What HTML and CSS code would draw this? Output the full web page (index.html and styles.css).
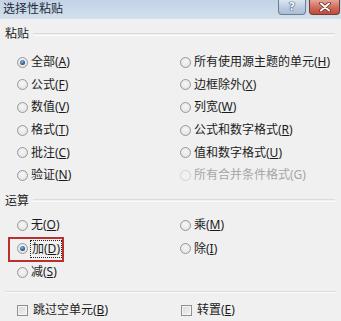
FILE: index.html
```html
<!DOCTYPE html>
<html lang="zh-CN">
<head>
<meta charset="utf-8">
<title>选择性粘贴</title>
<link rel="stylesheet" href="styles.css">
</head>
<body>
<div class="dialog">
  <div class="titlebar">
    <span class="title">选择性粘贴</span>
    <div class="tb-buttons">
      <span class="tb-btn help">?</span>
      <span class="tb-btn close">
        <svg width="14" height="10" viewBox="0 0 14 10"><path d="M3 1.5 L11 8.5 M11 1.5 L3 8.5" stroke="#6b2a22" stroke-width="3.6" stroke-linecap="round"/><path d="M3 1.5 L11 8.5 M11 1.5 L3 8.5" stroke="#ffffff" stroke-width="2" stroke-linecap="round"/></svg>
      </span>
    </div>
  </div>
  <div class="content">
    <div class="group-label"><span class="gl-text">粘贴</span><span class="gl-line"></span></div>
    <div class="grid paste">
      <div class="opt"><span class="radio checked"></span><span class="txt">全部(<u>A</u>)</span></div>
      <div class="opt"><span class="radio"></span><span class="txt">所有使用源主题的单元(<u>H</u>)</span></div>
      <div class="opt"><span class="radio"></span><span class="txt">公式(<u>F</u>)</span></div>
      <div class="opt"><span class="radio"></span><span class="txt">边框除外(<u>X</u>)</span></div>
      <div class="opt"><span class="radio"></span><span class="txt">数值(<u>V</u>)</span></div>
      <div class="opt"><span class="radio"></span><span class="txt">列宽(<u>W</u>)</span></div>
      <div class="opt"><span class="radio"></span><span class="txt">格式(<u>T</u>)</span></div>
      <div class="opt"><span class="radio"></span><span class="txt">公式和数字格式(<u>R</u>)</span></div>
      <div class="opt"><span class="radio"></span><span class="txt">批注(<u>C</u>)</span></div>
      <div class="opt"><span class="radio"></span><span class="txt">值和数字格式(<u>U</u>)</span></div>
      <div class="opt"><span class="radio"></span><span class="txt">验证(<u>N</u>)</span></div>
      <div class="opt disabled"><span class="radio"></span><span class="txt">所有合并条件格式(G)</span></div>
    </div>
    <div class="group-label op-label"><span class="gl-text">运算</span><span class="gl-line"></span></div>
    <div class="grid ops">
      <div class="opt"><span class="radio"></span><span class="txt">无(<u>O</u>)</span></div>
      <div class="opt"><span class="radio"></span><span class="txt">乘(<u>M</u>)</span></div>
      <div class="opt highlighted"><span class="radio checked"></span><span class="txt focus">加(<u>D</u>)</span></div>
      <div class="opt"><span class="radio"></span><span class="txt">除(<u>I</u>)</span></div>
      <div class="opt"><span class="radio"></span><span class="txt">减(<u>S</u>)</span></div>
    </div>
    <div class="separator"></div>
    <div class="grid checks">
      <div class="opt"><span class="checkbox"></span><span class="txt">跳过空单元(<u>B</u>)</span></div>
      <div class="opt"><span class="checkbox"></span><span class="txt">转置(<u>E</u>)</span></div>
    </div>
  </div>
</div>
</body>
</html>
```

FILE: styles.css
```css
html, body {
  margin: 0;
  padding: 0;
  background: #f0f0f0;
}

.dialog {
  width: 341px;
  height: 321px;
  overflow: hidden;
  background: #f0f0f0;
  font-family: "Noto Sans", "Noto Sans CJK SC", sans-serif;
  font-size: 12px;
  color: #1b1b1b;
}

.titlebar {
  height: 19px;
  display: flex;
  align-items: flex-start;
  background: linear-gradient(#c3d3e6, #d3dfec);
}

.title {
  padding-left: 3px;
  line-height: 18px;
  font-size: 12px;
  color: #1f2a38;
}

.tb-buttons {
  margin-left: auto;
  display: flex;
  gap: 3px;
  margin-right: 1px;
}

.tb-btn {
  height: 15px;
  display: flex;
  align-items: center;
  justify-content: center;
  border: 1px solid #6d7e93;
  border-top: none;
  border-radius: 0 0 4px 4px;
  box-sizing: border-box;
}

.help {
  width: 28px;
  background: linear-gradient(#dbe6f2, #b9cbe0 55%, #a9bed7);
  color: #ffffff;
  font-family: "DejaVu Sans", sans-serif;
  font-weight: bold;
  font-size: 11px;
  line-height: 14px;
  text-shadow: 0 0 1px #33475f, 0 0 1px #33475f, 0 0 1px #33475f;
}

.close {
  width: 31px;
  border-color: #7a3a30;
  background: linear-gradient(#e5a597, #d0705f 50%, #c0483a);
}

.content {
  padding: 0 5px;
}

.group-label {
  display: flex;
  align-items: center;
  height: 14px;
  margin-top: 8px;
}

.gl-text {
  line-height: 14px;
  padding-right: 4px;
}

.gl-line {
  flex: 1;
  height: 1px;
  margin-right: 1px;
  border-top: 1px solid #d7dce1;
  border-bottom: 1px solid #fbfbfb;
}

.grid {
  display: grid;
  grid-template-columns: 163px 1fr;
  margin-left: 12px;
}

.paste {
  margin-top: 10px;
  grid-auto-rows: 22.6px;
}

.op-label {
  margin-top: 7px;
}

.ops {
  margin-top: 6px;
  grid-auto-rows: 23.5px;
}

.checks {
  margin-top: 6px;
  grid-auto-rows: 22px;
}

.opt {
  display: flex;
  align-items: center;
  position: relative;
}

.txt {
  line-height: 16px;
  white-space: nowrap;
}

.txt u {
  text-decoration-thickness: 1px;
  text-underline-offset: 1px;
}

.radio {
  width: 11px;
  height: 11px;
  border-radius: 50%;
  box-sizing: border-box;
  border: 1px solid #989898;
  background: radial-gradient(circle at 50% 40%, #f7f7f7, #dedede);
  margin-right: 3px;
  position: relative;
  flex: none;
}

.radio.checked::after {
  content: "";
  position: absolute;
  left: 2px;
  top: 2px;
  width: 5px;
  height: 5px;
  border-radius: 50%;
  background: radial-gradient(circle at 40% 35%, #8cb4dc, #2a5d8f 60%, #163a5e);
}

.checkbox {
  width: 11px;
  height: 11px;
  box-sizing: border-box;
  border: 1px solid #8f8f8f;
  background: linear-gradient(135deg, #d8d8d8, #f4f4f4);
  box-shadow: inset 0 0 0 1px #f6f6f6;
  margin-right: 5px;
  flex: none;
}

.checks .opt:nth-child(2) .checkbox {
  margin-left: 1px;
}

.disabled .txt {
  color: #a6a6a6;
}

.disabled .radio {
  border-color: #d2d2d2;
  background: #f1f1f1;
}

.focus {
  outline: 1px dotted #222;
  outline-offset: 0px;
  padding: 0 1px;
}

.highlighted::after {
  content: "";
  position: absolute;
  left: -9px;
  top: 0px;
  width: 56px;
  height: 25px;
  border: 2px solid #b9302d;
  box-sizing: border-box;
}

.separator {
  margin-top: 7px;
  height: 0;
  border-top: 1px solid #d7dce1;
  border-bottom: 1px solid #fbfbfb;
}
```
